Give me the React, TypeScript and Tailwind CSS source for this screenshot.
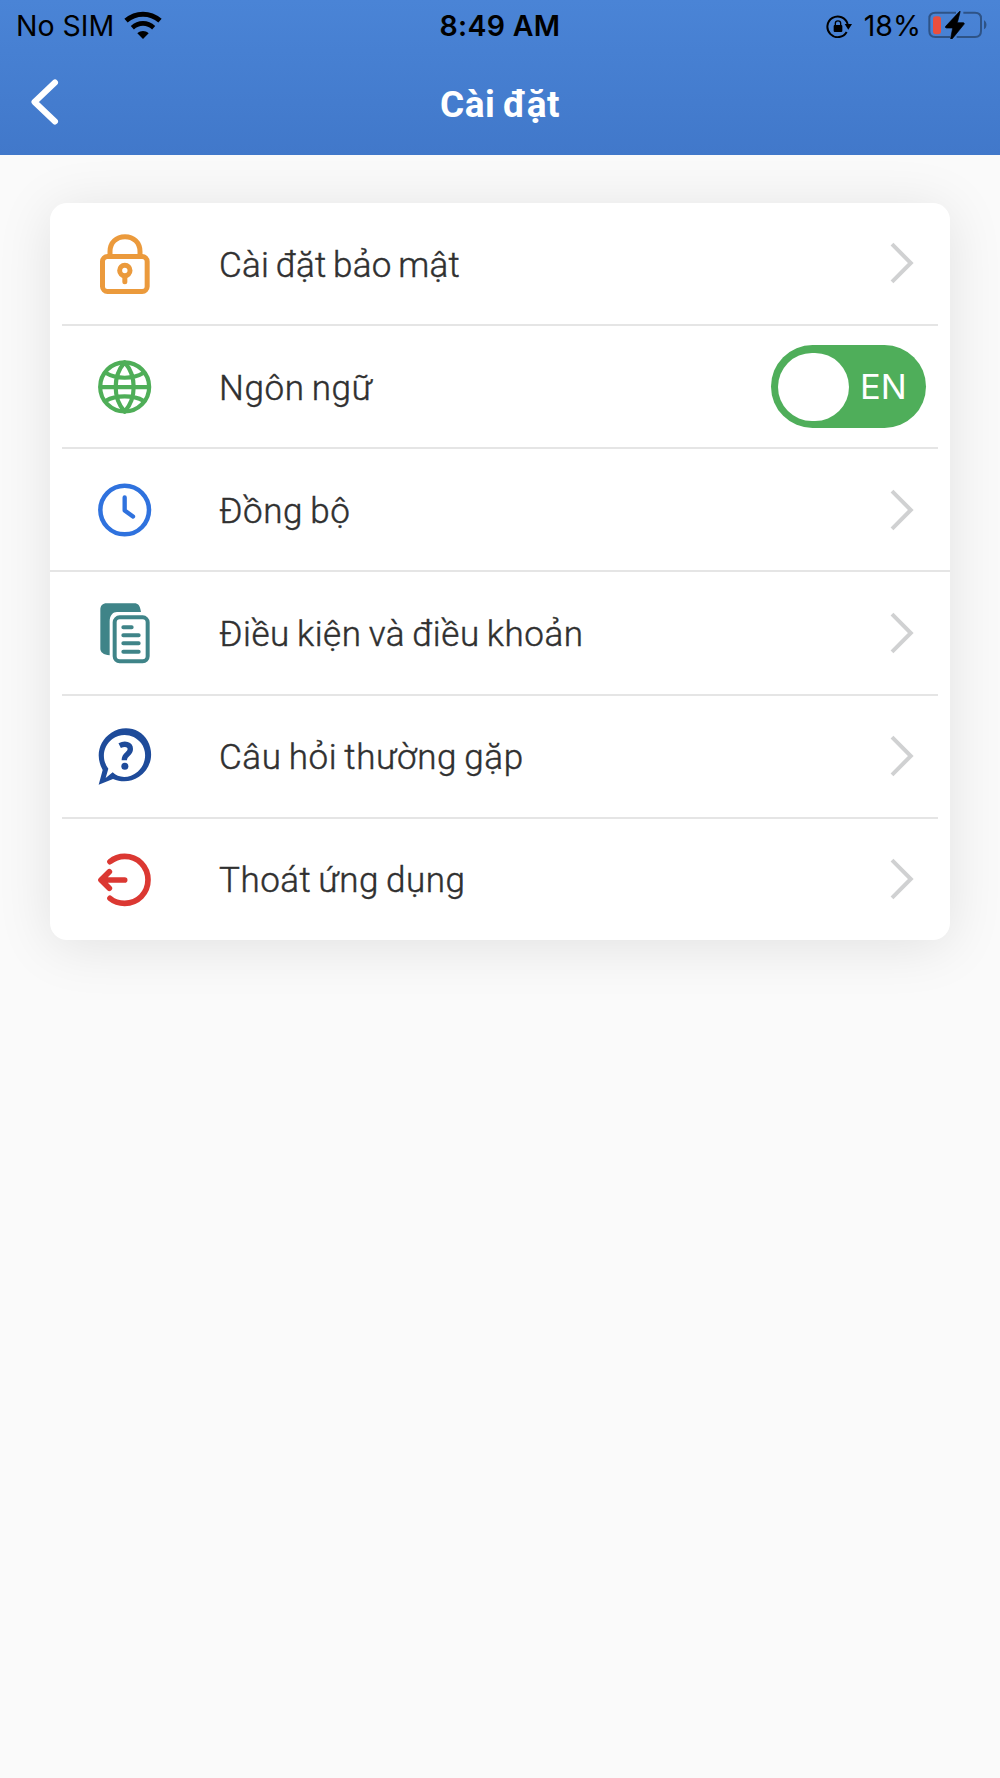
import type { ReactNode } from "react";

type IconProps = { viewBox: string; color: string; children: ReactNode };

function RowIcon({ viewBox, color, children }: IconProps) {
  return (
    <svg
      className="ml-[30px] h-[90px] w-[90px] shrink-0"
      viewBox={viewBox}
      fill="none"
      stroke={color}
      strokeLinecap="round"
      strokeLinejoin="round"
    >
      {children}
    </svg>
  );
}

const LockIcon = (
  <RowIcon viewBox="0 -6.5 270 270" color="#eb9a3c">
    <rect x="67.5" y="109" width="134" height="105" rx="15" strokeWidth="15" />
    <path d="M90 106V94C90 67 109 49.500 135 49.500S180 67 180 94v12" strokeWidth="15" />
    <circle cx="134.500" cy="151" r="15.500" strokeWidth="15" />
    <path d="M134.500 168v17" strokeWidth="15" />
  </RowIcon>
);

const GlobeIcon = (
  <RowIcon viewBox="0 4.8 270 270" color="#4fae58">
    <circle cx="134" cy="139.500" r="73.500" strokeWidth="12.500" />
    <path
      d="M62 140H206M134 66C118 84 107 110 107 140s11 56 27 74M134 66c16 18 27 44 27 74s-11 56-27 74M78 98c15 9 34 14 56 14s41-5 56-14M78 181c15-9 34-13 56-13s41 4 56 13"
      strokeWidth="12.500"
    />
  </RowIcon>
);

const ClockIcon = (
  <RowIcon viewBox="0 -0.6 270 270" color="#2f72de">
    <circle cx="134" cy="134.500" r="73" strokeWidth="13.500" />
    <path d="M134 97v39l25 18" strokeWidth="13" />
  </RowIcon>
);

const DocumentsIcon = (
  <RowIcon viewBox="0 -6 270 270" color="#3f8488">
    <path
      d="M80 40h83c11 0 17 6 20 26h-72C99 66 89 76 89 94v102C70 194 61 186 61 176V59c0-12 7-19 19-19Z"
      fill="#3f8488"
      stroke="none"
    />
    <rect x="104" y="82" width="99" height="132" rx="15" strokeWidth="12" />
    <path d="M130 112h25M130 136h46M130 160h46M130 185h46" strokeWidth="12" />
  </RowIcon>
);

const QuestionIcon = (
  <RowIcon viewBox="0 2 270 270" color="#1e4b9a">
    <path
      d="M56 223 68 179C45 138 56 92 94 67s88-14 109 25 9 84-26 107c-24 16-51 18-78 7Z"
      fill="#1e4b9a"
      stroke="none"
    />
    <path
      d="M77 203 85 175C63 146 69 107 97 86s66-14 86 12 15 65-10 86-57 20-75 2Z"
      fill="#fff"
      stroke="none"
    />
    <path
      d="M119 106c16-8 32-4 32 10 0 16-18 16-18 32v2"
      strokeWidth="16"
      strokeLinecap="butt"
    />
    <circle cx="134.500" cy="167.500" r="10.500" fill="#1e4b9a" stroke="none" />
  </RowIcon>
);

const ExitIcon = (
  <RowIcon viewBox="0 -3 270 270" color="#db3832">
    <path d="M90 80c12-10 28-16 44-16 40 0 70 31 70 70.500S174 205 134 205c-16 0-32-5-44-15" strokeWidth="17" />
    <path d="M134 135H64M88 110 63 135l25 25" strokeWidth="17" />
  </RowIcon>
);

function Chevron() {
  return (
    <svg className="mr-[36px] h-[42px] w-[24px]" viewBox="0 0 24 42" fill="none">
      <path d="M2 2.200 20.800 21 2 39.800" stroke="#d0d1d2" strokeWidth="4" />
    </svg>
  );
}

function LanguageToggle() {
  return (
    <button className="mr-[24px] flex h-[83px] w-[155px] items-center rounded-full bg-[#4fae5a] pl-[7px]">
      <span className="h-[68px] w-[71px] rounded-full bg-white" />
      <span className="ml-[11px] pt-[2px] font-['Inter'] text-[34.5px] leading-none font-normal text-white">EN</span>
    </button>
  );
}

const rows = [
  { label: "Cài đặt bảo mật", icon: LockIcon, track: "pt-[4px] tracking-[0.2px]" },
  { label: "Ngôn ngữ", icon: GlobeIcon, toggle: true, track: "pt-[3px] tracking-[0.6px]" },
  { label: "Đồng bộ", icon: ClockIcon, wide: true, track: "pt-[3px] tracking-[0.6px]" },
  { label: "Điều kiện và điều khoản", icon: DocumentsIcon, track: "pt-[3px] tracking-[0.56px]" },
  { label: "Câu hỏi thường gặp", icon: QuestionIcon, track: "pt-[3px] tracking-[0.6px]" },
  { label: "Thoát ứng dụng", icon: ExitIcon, track: "pt-[3px] tracking-[0.5px]" },
];

function StatusBar() {
  return (
    <div className="grid h-[51px] grid-cols-3 items-center font-['Inter'] text-[28.5px] leading-none text-black">
      <div className="flex items-center pl-[16px]">
        <span className="pt-[1px]">No SIM</span>
        <svg className="mb-[2px] ml-[10px] h-[28px] w-[38px]" viewBox="0 0 114 84" fill="none" stroke="#000">
          <path d="M6 29C36 3 78 3 108 29" strokeWidth="15" />
          <path d="M25 50c19-17 45-17 64 0" strokeWidth="14" />
          <path d="M40 67c10-9 24-9 34 0L57 84Z" fill="#000" stroke="none" />
        </svg>
      </div>
      <div className="pt-[1px] text-center font-semibold tracking-[0.3px]">8:49 AM</div>
      <div className="flex items-center justify-end pr-[13px]">
        <svg className="h-[24px] w-[26px]" viewBox="0 0 78 72" fill="none" stroke="#000">
          <path d="M62 54A31 31 0 1 1 65 30" strokeWidth="6" />
          <path d="M56 30h22L67 47Z" fill="#000" stroke="none" />
          <rect x="23" y="33" width="26" height="21" rx="3" fill="#000" stroke="none" />
          <path d="M28 35v-7c0-10 16-10 16 0v7" strokeWidth="4" />
        </svg>
        <span className="ml-[12px] pt-[1px]">18%</span>
        <svg className="mb-[2px] ml-[7px] h-[28px] w-[59px]" viewBox="0 0 177 84" fill="none">
          <path
            d="M84 5H22C10 5 4 12 4 22v38c0 11 6 18 18 18h44M106 5h35c12 0 18 7 18 17v38c0 11-6 18-18 18H86"
            stroke="#2e5386"
            strokeWidth="6"
          />
          <path d="M168 28c10 5 10 22 0 27Z" fill="#2e5386" />
          <rect x="15" y="16" width="24" height="54" rx="9" fill="#ea4e3d" />
          <path d="M95 1 53 46c-2 3 0 5 3 5h18L68 82c0 4 3 3 5 1l35-43c2-3 0-5-3-5H88L96 4c1-4 0-4-1-3Z" fill="#000" stroke="#000" strokeWidth="2" />
        </svg>
      </div>
    </div>
  );
}

export default function App() {
  return (
    <div className="flex h-[1778px] w-[1000px] flex-col overflow-hidden bg-[#fafafa]">
      <header className="h-[155px] shrink-0 bg-linear-to-b from-[#4a84d6] to-[#4178ca]">
        <StatusBar />
        <div className="grid h-[101px] grid-cols-3 items-center">
          <svg className="ml-[29px] h-[48px] w-[32px]" viewBox="0 0 32 48" fill="none">
            <path d="M26 4.500 5.500 24 26 43.500" stroke="#fff" strokeWidth="6" strokeLinecap="round" strokeLinejoin="round" />
          </svg>
          <h1 className="pt-[5px] text-center font-['Roboto'] text-[37px] leading-none font-bold tracking-[0.5px] [word-spacing:-2px] text-white">
            Cài đặt
          </h1>
        </div>
      </header>
      <main className="mx-[50px] mt-[47.8px] flex flex-col rounded-[17px] bg-white shadow-[0_6px_55px_rgba(0,0,0,0.1)]">
        {rows.map((row, i) => (
          <section key={row.label}>
            <div className="flex h-[121.2px] items-center">
              {row.icon}
              <span
                className={`ml-[49px] flex-1 font-['Roboto'] text-[35px] leading-none font-light [word-spacing:-2px] text-[#303030] [-webkit-text-stroke:0.45px_#303030] ${row.track}`}
              >
                {row.label}
              </span>
              {row.toggle ? <LanguageToggle /> : <Chevron />}
            </div>
            {i < rows.length - 1 && <div className={row.wide ? "h-[2px] bg-[#e5e5e5]" : "mx-[12px] h-[2px] bg-[#e5e5e5]"} />}
          </section>
        ))}
      </main>
    </div>
  );
}
